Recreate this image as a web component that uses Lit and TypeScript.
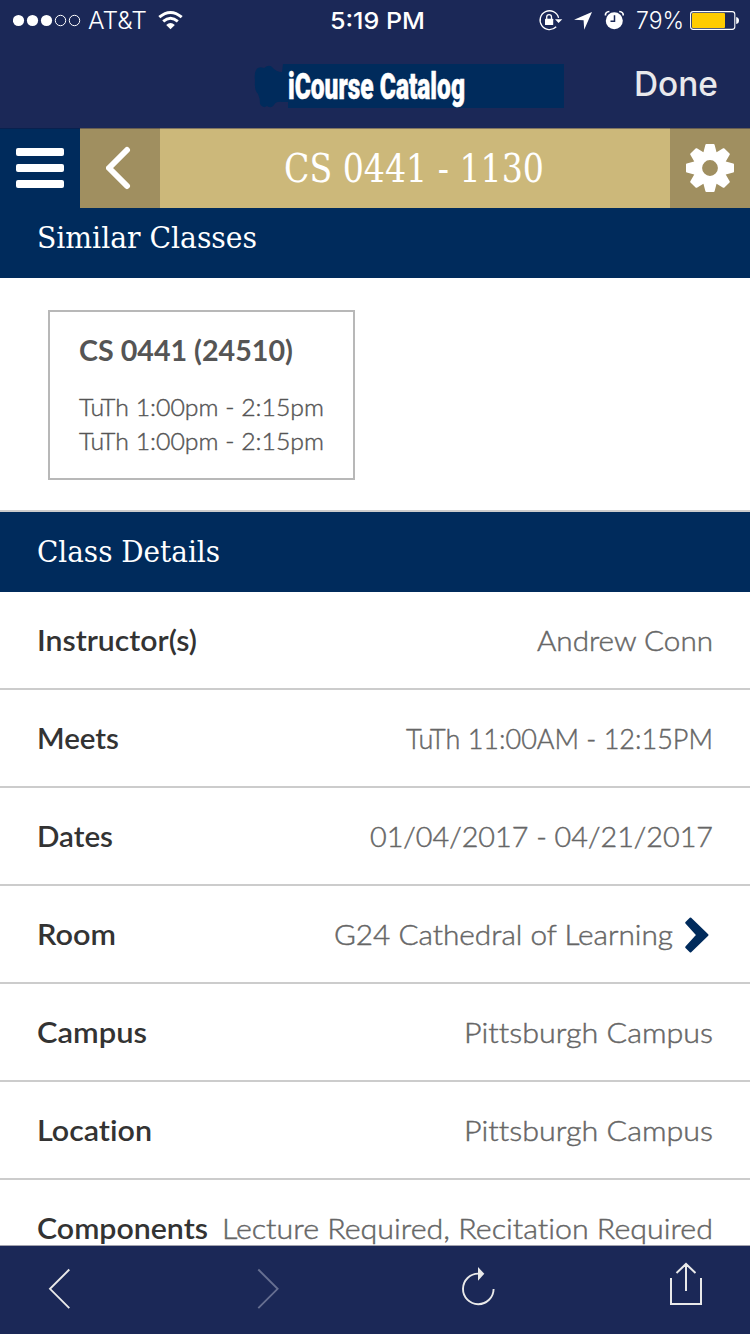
import { LitElement, html, css, svg, nothing } from "lit";
import { customElement, property } from "lit/decorators.js";

/** One line of text, condensed or expanded horizontally to fill a given width. */
@customElement("fit-text")
class FitText extends LitElement {
  @property({ type: Number }) width = 0;
  @property() text = "";

  static styles = css`
    :host { display: block; flex: none; white-space: pre; }
    .line { display: inline-block; transform-origin: 0 50%; vertical-align: top; }
  `;

  updated() {
    const line = this.renderRoot.querySelector(".line") as HTMLElement;
    line.style.transform = "none";
    const natural = line.getBoundingClientRect().width;
    this.style.width = this.width + "px";
    if (natural > 0) line.style.transform = `scaleX(${this.width / natural})`;
  }

  render() {
    return html`<span class="line">${this.text}</span>`;
  }
}

interface Detail {
  label: string;
  labelWidth: number;
  value: string;
  valueWidth: number;
  link?: boolean;
}

const details: Detail[] = [
  { label: "Instructor(s)", labelWidth: 160, value: "Andrew Conn", valueWidth: 176 },
  { label: "Meets", labelWidth: 82, value: "TuTh 11:00AM - 12:15PM", valueWidth: 307 },
  { label: "Dates", labelWidth: 76, value: "01/04/2017 - 04/21/2017", valueWidth: 343 },
  { label: "Room", labelWidth: 79, value: "G24 Cathedral of Learning", valueWidth: 339, link: true },
  { label: "Campus", labelWidth: 110, value: "Pittsburgh Campus", valueWidth: 249 },
  { label: "Location", labelWidth: 115, value: "Pittsburgh Campus", valueWidth: 249 },
  { label: "Components", labelWidth: 171, value: "Lecture Required, Recitation Required", valueWidth: 491 },
];

const gearTeeth = [0, 45, 90, 135, 180, 225, 270, 315].map(
  (a) => svg`<path d="M-7 -14 L-4.6 -23.2 Q-4.4 -24 -3.6 -24 H3.6 Q4.4 -24 4.6 -23.2 L7 -14Z" transform="rotate(${a})"/>`
);

@customElement("app-root")
class AppRoot extends LitElement {
  static styles = css`
    :host {
      display: flex; flex-direction: column; width: 750px; height: 1334px;
      overflow: hidden; background: #fff; font-family: "Lato", sans-serif;
      font-variant-ligatures: none;
    }
    * { box-sizing: border-box; }
    svg { display: block; flex: none; }
    .status {
      flex: none; height: 40px; background: #1b2857; color: #fff;
      display: grid; grid-template-columns: 330px 96px 1fr;
      font: 400 23.5px/42px "Inter", sans-serif;
    }
    .left { display: flex; padding-left: 13px; }
    .carrier { margin: 0 11px 0 7px; font-weight: 350; }
    .time { font-weight: 500; }
    .right { display: flex; padding-left: 112px; }
    .percent { margin: 0 6px 0 10px; font-weight: 350; }
    .nav {
      flex: none; height: 88px; background: #1b2857;
      display: grid; grid-template-columns: 254px 310px 1fr;
    }
    .brand { display: grid; padding-top: 24px; height: 70px; }
    .brand > * { grid-area: 1 / 1; }
    .brand-name {
      margin-left: 34px; color: #fff; -webkit-text-stroke: 0.5px #fff;
      font: 900 36px/46px "Roboto", sans-serif;
    }
    .done {
      padding-left: 70px; color: #e9e9ec;
      font: 500 33.5px/89px "Inter", sans-serif;
    }
    .bar {
      flex: none; height: 80px; color: #fff; background: #002b5c;
      display: grid; grid-template-columns: 80px 80px 1fr 80px;
    }
    .cell { display: flex; align-items: center; justify-content: center; box-shadow: inset 0 1px rgba(20, 20, 60, 0.4); }
    .shade { background: #a08f60; }
    .gold { background: #ccb87a; }
    .slab { font-family: "DejaVu Serif Condensed", "DejaVu Serif", serif; font-stretch: condensed; font-weight: 400; }
    .title { font-size: 39px; line-height: 78px; padding-top: 1px; margin-right: 2px; }
    .page { flex: 1; min-height: 0; overflow: hidden; }
    .heading {
      height: 80px; background: #002b5c; color: #fff; padding-left: 37px;
      font-size: 29.5px; line-height: 81px;
    }
    .first { height: 70px; line-height: 61px; }
    .similar { height: 234px; border-bottom: 2px solid #ccc; padding: 32px 48px; }
    .card {
      width: 307px; height: 170px; border: 2px solid #b8b8b8; color: #555;
      padding: 21px 0 0 29px; font-size: 24px; line-height: 34px;
    }
    .card-title { font-size: 28px; font-weight: 700; margin-bottom: 23px; }
    .card-time { font-weight: 300; -webkit-text-stroke: 0.4px #555; }
    .row {
      height: 98px; border-bottom: 2px solid #ccc; padding: 1px 37px 0 37px;
      display: flex; align-items: center; justify-content: space-between;
      font-size: 28px; line-height: 41px;
    }
    .label { color: #333; font-weight: 600; }
    .value { color: #666; font-weight: 300; -webkit-text-stroke: 0.45px #666; display: flex; align-items: center; }
    .chevron { margin: 1px 3px 0 11px; }
    .tools {
      flex: none; height: 89px; background: #1b2857; border-top: 1px solid #a2a2ae;
      display: flex; align-items: flex-start; padding: 16px 46px 0 48px;
    }
    .forward { margin-left: 184px; }
    .reload { margin-left: 181px; }
    .share { margin-left: auto; }
  `;

  private status() {
    return html`<div class="status">
      <div class="left">
        <svg width="68" height="40" fill="#fff">
          <circle cx="5.5" cy="20.5" r="5.6" /><circle cx="19.5" cy="20.5" r="5.6" /><circle cx="33.5" cy="20.5" r="5.6" />
          <g fill="none" stroke="#fff" stroke-width="1"><circle cx="47.5" cy="20.5" r="5.2" /><circle cx="61.5" cy="20.5" r="5.2" /></g>
        </svg>
        <fit-text class="carrier" text="AT&amp;T" .width=${59}></fit-text>
        <svg width="26" height="40" viewBox="0 0 26 40">
          <g fill="none" stroke="#fff" stroke-width="2.9">
            <path d="M1.3 17.2 Q12.5 7.6 23.7 17.2" /><path d="M5.2 21.4 Q12.5 15 19.8 21.4" />
          </g>
          <path d="M8.2 25 Q12.5 21.2 16.8 25 L12.5 29.2Z" fill="#fff" />
        </svg>
      </div>
      <fit-text class="time" text="5:19 PM" .width=${95}></fit-text>
      <div class="right">
        <svg width="25" height="40" viewBox="0 0 25 40">
          <path d="M20.6 17.8 A9.4 9.4 0 1 0 18.2 26.8" fill="none" stroke="#fff" stroke-width="1.3" />
          <path d="M17 19.2 H24.3 L20.6 22.9Z" fill="#fff" />
          <rect x="7" y="18.7" width="8.2" height="6.3" rx=".5" fill="#fff" />
          <path d="M8.7 19 V17 Q8.7 14.6 11.1 14.6 Q13.5 14.6 13.5 17 V19" fill="none" stroke="#fff" stroke-width="1.3" />
        </svg>
        <svg width="30" height="40" viewBox="0 0 30 40"><path d="M29 12 L21.2 29.7 L20.6 20.2 L11 19.7Z" fill="#fff" /></svg>
        <svg width="33" height="40" viewBox="0 0 33 40">
          <circle cx="21.3" cy="20.7" r="8.5" fill="#fff" />
          <path d="M12.5 15.5 Q12 12 16.4 11.5 M30.2 15.5 Q30.6 12 26.2 11.5" fill="none" stroke="#fff" stroke-width="1.7" />
          <path d="M21.5 15.2 V21.3 H17.5" fill="none" stroke="#1b2857" stroke-width="1.5" />
        </svg>
        <fit-text class="percent" text="79%" .width=${48}></fit-text>
        <svg width="50" height="40" viewBox="0 0 50 40">
          <rect x=".6" y="11.6" width="44.2" height="17.8" rx="2.6" fill="none" stroke="#fff" stroke-width="1.1" />
          <rect x="2" y="13" width="33" height="15" rx="1" fill="#fc0" />
          <path d="M46.2 17 Q49 17.5 49 20.5 Q49 23.5 46.2 24Z" fill="#fff" />
        </svg>
      </div>
    </div>`;
  }

  render() {
    return html`
      ${this.status()}
      <div class="nav">
        <span></span>
        <div class="brand">
          <svg width="310" height="44" viewBox="0 0 310 44" fill="#002b5c">
            <path d="M29 0 H310 V44 H34 V38 H28 Q22 37 20 41 Q17 45 13 42 Q9 45 6 40 Q6 34 4 30 Q0 26 1 17 Q0 10 2 6 Q4 2 10 4 Q15 0 18 3 Q22 8 28 8Z" />
          </svg>
          <fit-text class="brand-name" text="iCourse Catalog" .width=${177}></fit-text>
        </div>
        <fit-text class="done" text="Done" .width=${84}></fit-text>
      </div>
      <div class="bar">
        <div class="cell">
          <svg width="48" height="40" fill="#fff"><rect width="48" height="8" rx="2" /><rect y="16" width="48" height="8" rx="2" /><rect y="32" width="48" height="8" rx="2" /></svg>
        </div>
        <div class="cell shade">
          <svg width="28" height="44" viewBox="0 0 28 44"><path d="M21 4 L3 22 L21 40" fill="none" stroke="#fff" stroke-width="6" stroke-linecap="round" stroke-linejoin="round" /></svg>
        </div>
        <div class="cell gold">
          <fit-text class="slab title" text="CS 0441 - 1130" .width=${260}></fit-text>
        </div>
        <div class="cell shade">
          <svg width="48" height="48" viewBox="-24 -24 48 48" fill="#fff">
            ${gearTeeth}<circle r="12.3" fill="none" stroke="#fff" stroke-width="8.8" />
          </svg>
        </div>
      </div>
      <div class="page">
        <div class="slab heading first"><fit-text text="Similar Classes" .width=${220}></fit-text></div>
        <div class="similar">
          <div class="card">
            <fit-text class="card-title" text="CS 0441 (24510)" .width=${214}></fit-text>
            <fit-text class="card-time" text="TuTh 1:00pm - 2:15pm" .width=${245}></fit-text>
            <fit-text class="card-time" text="TuTh 1:00pm - 2:15pm" .width=${245}></fit-text>
          </div>
        </div>
        <div class="slab heading"><fit-text text="Class Details" .width=${183}></fit-text></div>
        ${details.map(
          (d) => html`<div class="row">
            <fit-text class="label" .text=${d.label} .width=${d.labelWidth}></fit-text>
            <div class="value">
              <fit-text .text=${d.value} .width=${d.valueWidth}></fit-text>
              ${d.link
                ? html`<svg class="chevron" width="26" height="38" viewBox="0 0 26 38" fill="#002b5c" stroke="#002b5c" stroke-width="2" stroke-linejoin="round"><path d="M6.5 2.5 L23.5 19 L6.5 35.5 L2.2 31.2 L13.3 19 L2.2 6.8Z" /></svg>`
                : nothing}
            </div>
          </div>`
        )}
      </div>
      <div class="tools">
        <svg width="24" height="56" fill="none" stroke="#e9e9e9" stroke-width="1.9"><path d="M21.3 7.5 L2 26.8 L21.3 46.1" /></svg>
        <svg class="forward" width="24" height="56" fill="none" stroke="#666f91" stroke-width="1.9"><path d="M2.3 7.5 L21.6 26.8 L2.3 46.1" /></svg>
        <svg class="reload" width="34" height="56">
          <path d="M17.5 11.6 A15.3 15.3 0 1 0 32.6 27" fill="none" stroke="#e9e9e9" stroke-width="1.9" />
          <path d="M17 5 L23.3 11.8 L17 18.8Z" fill="#e9e9e9" />
        </svg>
        <svg class="share" width="34" height="56" fill="none" stroke="#e9e9e9" stroke-width="2">
          <path d="M1 16 V42 H31 V16 M16 2 V29 M6.5 11 L16 2 L25.5 11" />
        </svg>
      </div>
    `;
  }
}
